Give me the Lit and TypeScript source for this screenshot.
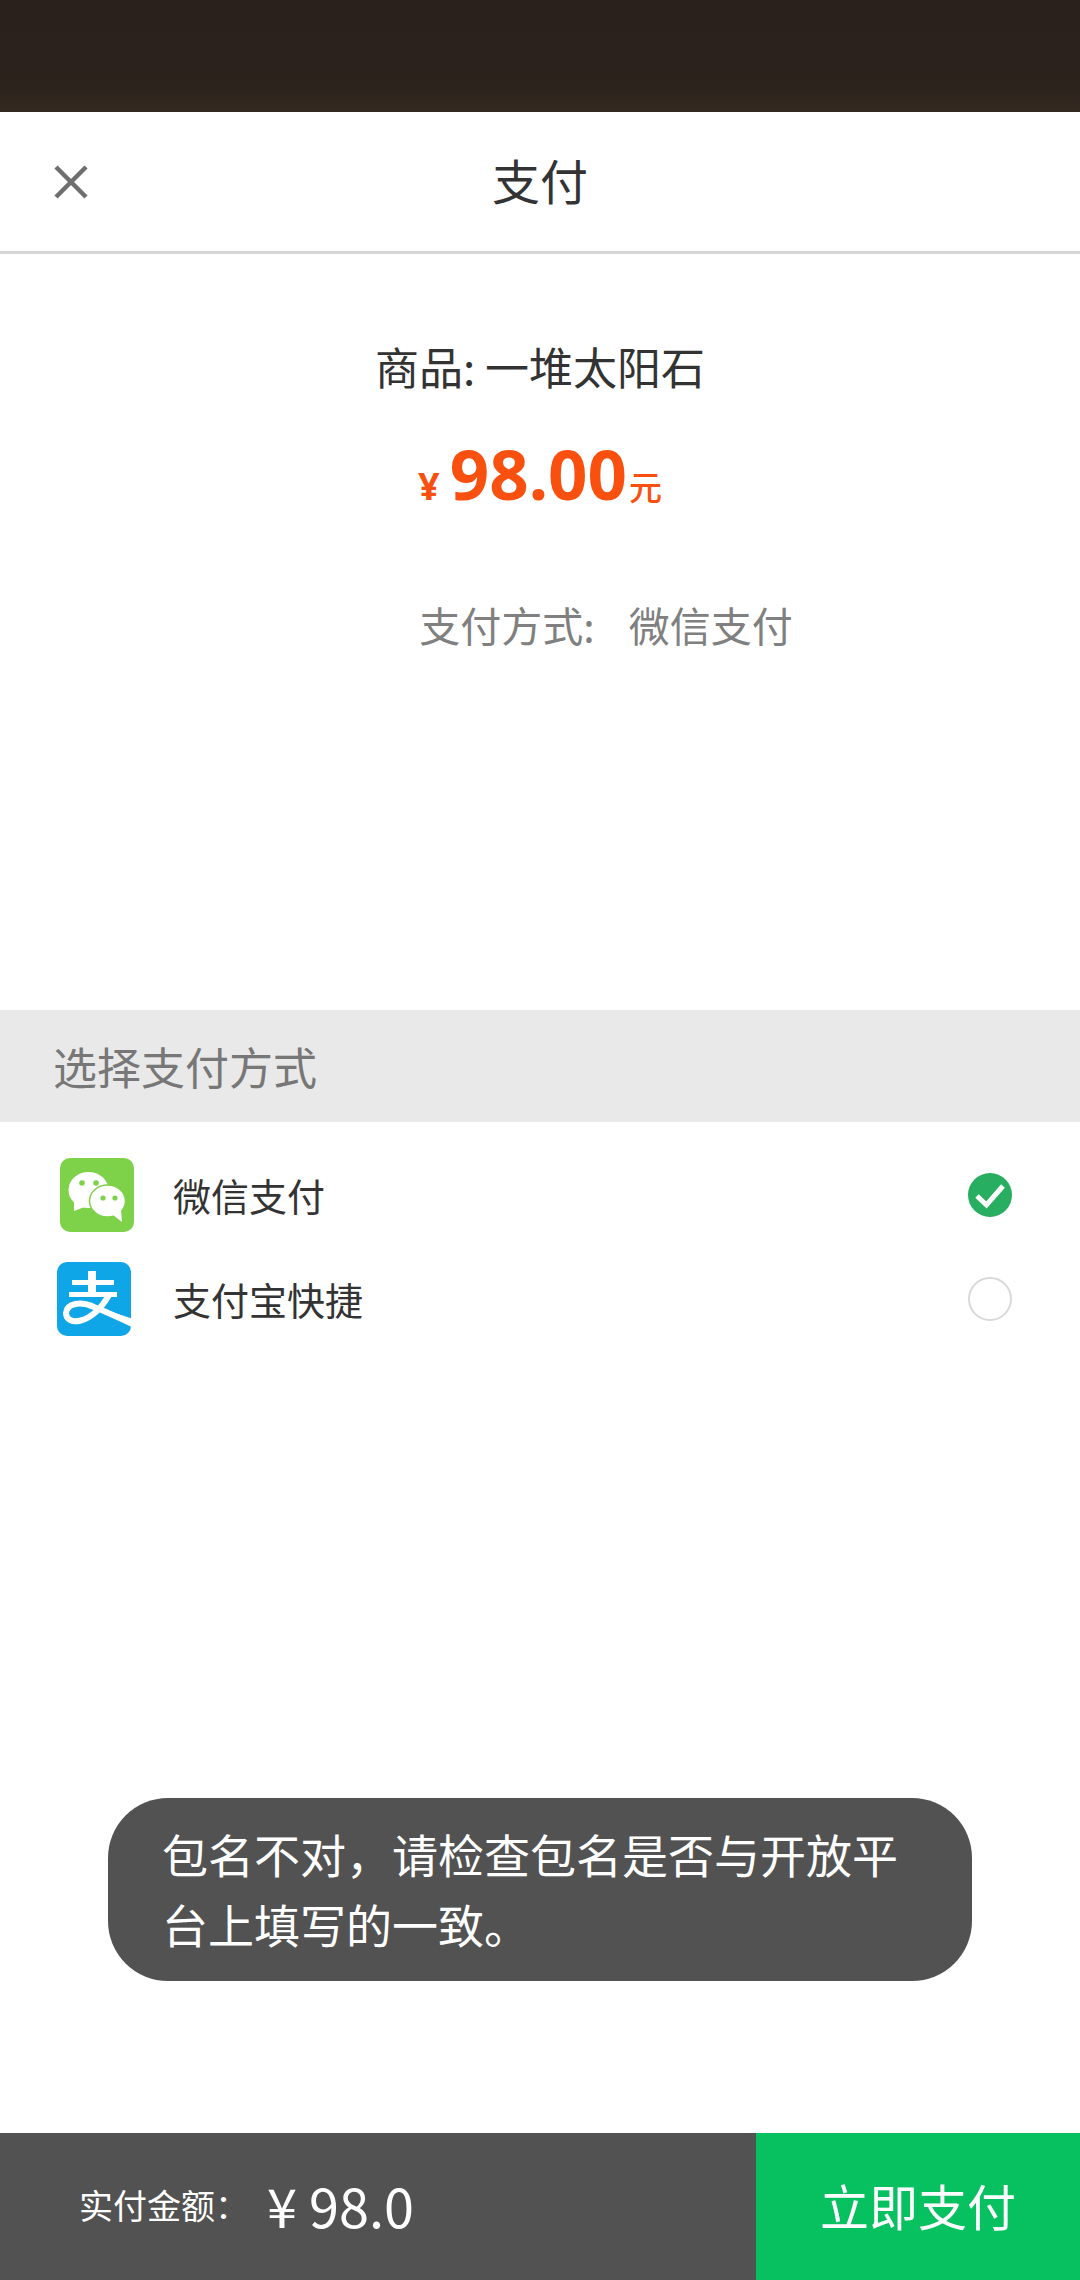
import { LitElement, html, css } from "lit";
import { customElement } from "lit/decorators.js";

@customElement("app-root")
export class AppRoot extends LitElement {
  static styles = css`
    :host { display: block; width: 1080px; height: 2280px; overflow: hidden; background: #fff; font-family: "Noto Sans CJK SC", "Noto Sans", sans-serif; font-weight: 300; }
    .page { position: relative; display: flex; flex-direction: column; height: 2280px; }
    .top { height: 112px; background: linear-gradient(#2a211c 0, #2b221c 75%, #352a21 100%); flex: none; }
    .nav { position: relative; height: 139px; flex: none; box-sizing: content-box; display: flex; align-items: center; justify-content: center; border-bottom: 3px solid #d6d6d6; color: #333; font-size: 48px; line-height: 48px; font-weight: 400; }
    .navtitle { margin-bottom: 6px; }
    .close { position: absolute; left: 54px; top: 53px; width: 34px; height: 34px; }
    .summary { flex: none; height: 756px; display: flex; flex-direction: column; align-items: center; }
    .goods { margin-top: 82px; height: 60px; line-height: 60px; font-size: 44px; font-weight: 400; color: #333; }
    .price { margin-top: 32px; height: 90px; display: flex; align-items: baseline; justify-content: center; color: #f9500f; font-family: "Noto Sans", sans-serif; font-weight: 700; line-height: 90px; }
    .yen { font-size: 38px; margin-right: 10px; }
    .num { font-size: 69px; }
    .unit { font-size: 33px; font-family: "Noto Sans CJK SC", sans-serif; font-weight: 500; margin-left: 2px; }
    .method { margin-top: 76px; margin-left: 132px; display: flex; gap: 34px; height: 60px; line-height: 60px; font-size: 41px; font-weight: 400; color: #808080; }
    .section { flex: none; height: 112px; background: #e9e9e9; color: #777; font-size: 44px; font-weight: 400; padding-left: 53px; display: flex; align-items: center; }
    .rows { flex: none; padding-top: 36px; display: flex; flex-direction: column; }
    .row { display: flex; align-items: center; font-size: 38px; font-weight: 400; color: #333; padding-right: 68px; }
    .row .ico { width: 74px; height: 74px; flex: none; }
    .row .label { flex: 1; }
    .row.wx { padding-left: 60px; height: 73px; margin-bottom: 31px; }
    .row.wx .label { margin-left: 39px; }
    .row.ali { padding-left: 57px; height: 73px; }
    .row.ali .label { margin-left: 42px; }
    .radio { width: 44px; height: 44px; flex: none; }
    .toast { position: absolute; left: 108px; top: 1798px; width: 864px; height: 183px; box-sizing: border-box; padding: 20px 54px; border-radius: 60px; background: #525252; color: #fff; font-size: 46px; line-height: 70px; font-weight: 400; }
    .bar { margin-top: auto; flex: none; height: 147px; display: flex; background: #525252; color: #fff; }
    .total { flex: 1; display: flex; align-items: center; padding-left: 79px; padding-bottom: 4px; font-size: 34px; font-weight: 400; }
    .total .amt { font-size: 54px; font-family: "Noto Sans CJK SC", sans-serif; font-weight: 400; margin-left: 18px; }
    .pay { width: 324px; flex: none; background: #07c160; display: flex; align-items: center; justify-content: center; padding-bottom: 4px; font-size: 49px; font-weight: 400; }
  `;

  render() {
    return html`<div class="page">
      <div class="top"></div>
      <div class="nav">
        <svg class="close" viewBox="0 0 34 34"><path d="M2 2 L32 32 M32 2 L2 32" stroke="#6e6e6e" stroke-width="4.5" fill="none"/></svg>
        <span class="navtitle">支付</span>
      </div>
      <div class="summary">
        <div class="goods">商品: 一堆太阳石</div>
        <div class="price"><span class="yen">¥</span><span class="num">98.00</span><span class="unit">元</span></div>
        <div class="method"><span>支付方式:</span><span>微信支付</span></div>
      </div>
      <div class="section">选择支付方式</div>
      <div class="rows">
        <div class="row wx">
          <svg class="ico" viewBox="0 0 74 74">
            <rect width="74" height="74" rx="10" fill="#7ed24a"/>
            <ellipse cx="28.5" cy="32" rx="20" ry="18" fill="#fff"/>
            <path d="M14 44 L14 53 L27 48 Z" fill="#fff"/>
            <ellipse cx="47.5" cy="43" rx="18" ry="16" fill="#fff" stroke="#7ed24a" stroke-width="1.5"/>
            <path d="M53 57 L62 64 L61 52 Z" fill="#fff"/>
            <circle cx="22" cy="25" r="2.8" fill="#7ed24a"/><circle cx="36" cy="25" r="2.8" fill="#7ed24a"/>
            <circle cx="43" cy="40" r="2.6" fill="#7ed24a"/><circle cx="55" cy="40" r="2.6" fill="#7ed24a"/>
          </svg>
          <span class="label">微信支付</span>
          <svg class="radio" viewBox="0 0 44 44"><circle cx="22" cy="22" r="22" fill="#27ae60"/><path d="M9 23 L18.5 32 L35 13" stroke="#fff" stroke-width="5" fill="none"/></svg>
        </div>
        <div class="row ali">
          <svg class="ico" viewBox="0 0 74 74">
            <defs><clipPath id="alic"><path d="M10 0 H64 A10 10 0 0 1 74 10 V64 A10 10 0 0 1 64 74 H10 A10 10 0 0 1 0 64 V10 A10 10 0 0 1 10 0 Z"/></clipPath></defs>
            <g clip-path="url(#alic)">
              <rect width="74" height="74" fill="#0fa6e8"/>
              <path d="M31 9 H39 V18 H57 V23 H39 V30 H60 V35 H12 V30 H31 V23 H15 V18 H31 Z" fill="#fff"/>
              <path d="M78 63 C62 56 50 50 37 45 C24 39 10 41 9 51 C9 64 34 64 52 33" stroke="#fff" stroke-width="6" fill="none"/>
              <path d="M46 47 L76 57 V66 Z" fill="#fff"/>
            </g>
          </svg>
          <span class="label">支付宝快捷</span>
          <svg class="radio" viewBox="0 0 44 44"><circle cx="22" cy="22" r="21" fill="#fff" stroke="#d9d9d9" stroke-width="2"/></svg>
        </div>
      </div>
      <div class="toast">包名不对，请检查包名是否与开放平台上填写的一致。</div>
      <div class="bar">
        <div class="total">实付金额：<span class="amt">¥ 98.0</span></div>
        <div class="pay">立即支付</div>
      </div>
    </div>`;
  }
}
